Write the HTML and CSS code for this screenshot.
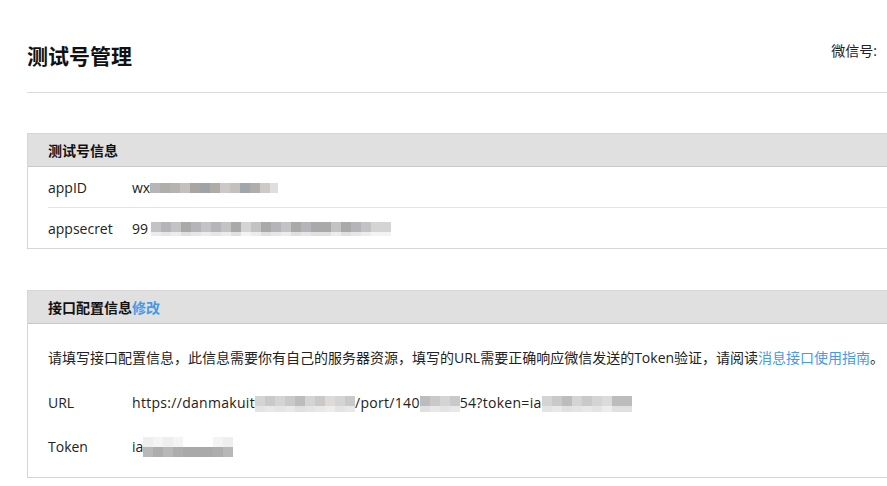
FILE: index.html
```html
<!DOCTYPE html>
<html lang="zh-CN">
<head>
<meta charset="utf-8">
<title>测试号管理</title>
<link rel="stylesheet" href="styles.css">
</head>
<body>
<div class="page">
  <header class="page-head">
    <h1 class="title">测试号管理</h1>
    <div class="account">微信号:</div>
  </header>

  <section class="panel panel-info">
    <div class="panel-head">测试号信息</div>
    <div class="panel-body">
      <div class="row">
        <span class="label">appID</span>
        <span class="value">wx<span class="mosaic mz-id"><i class="a"></i><i class="b"></i><i class="c"></i><i class="d"></i><i class="e"></i><i class="f"></i><i class="g"></i><i class="h"></i><i class="d"></i><i class="i"></i><i class="b"></i><i class="h"></i><i class="j"></i></span></span>
      </div>
      <div class="row">
        <span class="label">appsecret</span>
        <span class="value">99<span class="mosaic mz-secret"><i class="k1"></i><i class="k2"></i><i class="k1"></i><i class="k3"></i><i class="k2"></i><i class="k1"></i><i class="k2"></i><i class="k1"></i><i class="k3"></i><i class="k4"></i><i class="k1"></i><i class="k3"></i><i class="k2"></i><i class="k1"></i><i class="k3"></i><i class="k2"></i><i class="k3"></i><i class="k3"></i><i class="k1"></i><i class="k3"></i><i class="k2"></i><i class="k1"></i><i class="k4"></i><i class="k4"></i></span></span>
      </div>
    </div>
  </section>

  <section class="panel panel-config">
    <div class="panel-head">接口配置信息<a class="link" href="#">修改</a></div>
    <div class="panel-body config-body">
      <p class="desc">请填写接口配置信息，此信息需要你有自己的服务器资源，填写的URL需要正确响应微信发送的Token验证，请阅读<a class="link" href="#">消息接口使用指南</a>。</p>
      <div class="cfg-row">
        <span class="label">URL</span>
        <span class="value wide">https://danmakuit<span class="mosaic mz-url"><i class="u1"></i><i class="u2"></i><i class="u1"></i><i class="u2"></i><i class="u3"></i><i class="u1"></i><i class="u2"></i><i class="u4"></i><i class="u1"></i><i class="u2"></i></span>/port/140<span class="mosaic mz-url"><i class="u3"></i><i class="u2"></i><i class="u1"></i><i class="u2"></i></span>54?token=ia<span class="mosaic mz-url"><i class="u1"></i><i class="u2"></i><i class="u3"></i><i class="u1"></i><i class="u2"></i><i class="u1"></i><i class="u4"></i><i class="u3"></i><i class="u3"></i></span></span>
      </div>
      <div class="cfg-row">
        <span class="label">Token</span>
        <span class="value">ia<span class="mosaic mz-token"><i class="t1"></i><i class="t2"></i><i class="t1"></i><i class="t2"></i><i class="t3"></i><i class="t3"></i><i class="t3"></i><i class="t2"></i><i class="t1"></i></span></span>
      </div>
    </div>
  </section>
</div>
</body>
</html>
```

FILE: styles.css
```css
html, body {
  margin: 0;
  padding: 0;
  background: #ffffff;
  overflow: hidden;
}

body {
  font-family: "Open Sans", "Noto Sans CJK SC", sans-serif;
  font-size: 14px;
  color: #222222;
}

.page {
  width: 900px;
  padding-left: 27px;
}

.page-head {
  display: flex;
  align-items: flex-start;
  padding-top: 40px;
  height: 52px;
  border-bottom: 1px solid #d9d9d9;
}

.title {
  margin: 0;
  font-size: 21px;
  line-height: 30px;
  font-weight: 700;
  color: #111111;
  font-family: "Noto Sans CJK SC", sans-serif;
}

.account {
  margin-left: auto;
  margin-right: 50px;
  margin-top: 1px;
  line-height: 20px;
  font-size: 14px;
  color: #222222;
}

.panel {
  border: 1px solid #d6d6d6;
}

.panel-info {
  margin-top: 40px;
}

.panel-config {
  margin-top: 41px;
}

.panel-head {
  height: 32px;
  line-height: 32px;
  padding-left: 20px;
  background: #e0e0e0;
  border-bottom: 1px solid #c9c9c9;
  font-weight: 700;
  font-size: 14px;
  color: #111111;
  font-family: "Noto Sans CJK SC", sans-serif;
}

.panel-head .link {
  font-weight: 700;
}

.link {
  color: #459ae9;
  text-decoration: none;
}

.panel-body {
  padding-left: 20px;
}

.row {
  display: flex;
  align-items: center;
  height: 40px;
}

.row + .row {
  border-top: 1px solid #e4e4e4;
}

.label {
  width: 84px;
  flex: none;
}

.value {
  display: flex;
  align-items: center;
  white-space: nowrap;
}

.value.wide {
  letter-spacing: 0.3px;
}

.config-body {
  padding-top: 12px;
  padding-bottom: 9px;
}

.desc {
  margin: 0;
  height: 44px;
  line-height: 44px;
  white-space: nowrap;
}

.cfg-row {
  display: flex;
  align-items: center;
  height: 44px;
}

.mosaic {
  display: inline-flex;
}

.mosaic i {
  display: block;
  width: 10px;
}

.mz-id i { height: 10px; margin-top: 2px; }
.mz-id .a { background: #b5b6ba; }
.mz-id .b { background: #b0aeab; }
.mz-id .c { background: #b5b4b2; }
.mz-id .d { background: #c4c0bd; }
.mz-id .e { background: #a8a5a3; }
.mz-id .f { background: #9ea3a6; }
.mz-id .g { background: #b0aca8; }
.mz-id .h { background: #ccc9c8; }
.mz-id .i { background: #a1a6ad; }
.mz-id .j { background: #e0dfe0; width: 8px; }

.mz-secret { margin-left: 3px; }
.mz-secret i { height: 14px; margin-top: 2px; }
.mz-secret .k1 { background: linear-gradient(#c4c3c3 70%, #ececec 70%); }
.mz-secret .k2 { background: linear-gradient(#b3b5b8 70%, #e6e6e6 70%); }
.mz-secret .k3 { background: linear-gradient(#a9a9a9 70%, #e0e0e0 70%); }
.mz-secret .k4 { background: linear-gradient(#d4d4d6 70%, #f3f3f3 70%); }

.mz-url i { height: 16px; margin-top: 3px; }
.mz-url .u1 { background: linear-gradient(#d4d4d4 60%, #e4e4e4 60%); }
.mz-url .u2 { background: linear-gradient(#c9c9c9 60%, #e8e8e8 60%); }
.mz-url .u3 { background: linear-gradient(#bdbcbc 60%, #e0e0e0 60%); }
.mz-url .u4 { background: linear-gradient(#dddad7 60%, #ececec 60%); }

.mz-token i { height: 20px; margin-top: 2px; }
.mz-token .t1 { background: linear-gradient(#eeeeef 50%, #b8b8b8 50%); }
.mz-token .t2 { background: linear-gradient(#f4f4f4 50%, #adadad 50%); }
.mz-token .t3 { background: linear-gradient(#ffffff 50%, #a9a9a9 50%); }
```
